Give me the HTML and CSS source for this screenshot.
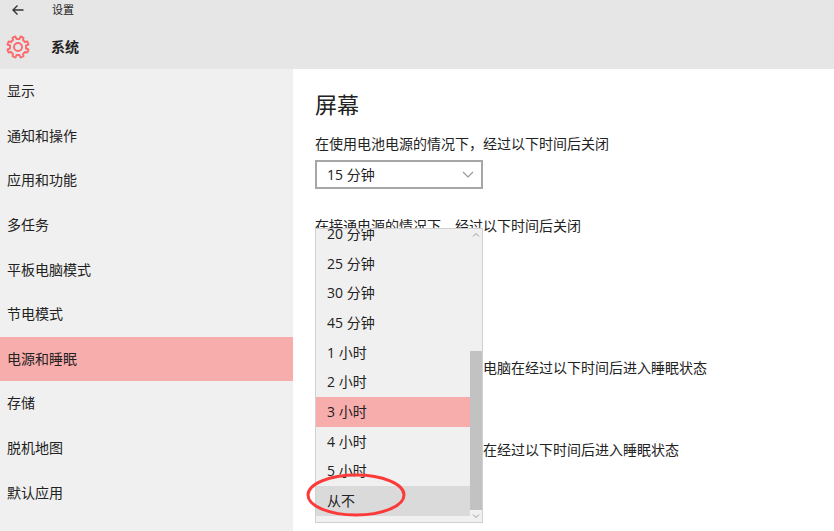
FILE: index.html
```html
<!DOCTYPE html>
<html lang="zh-CN">
<head>
<meta charset="utf-8">
<title>设置</title>
<link rel="stylesheet" href="styles.css">
</head>

<body>
<header class="header">
  <div class="titlebar">
    <button class="back" type="button" aria-label="返回">
      <svg width="12" height="12" viewBox="0 0 12 12"><path d="M11.500 6H1M5.500 1.500L1 6l4.500 4.500"/></svg>
    </button>
    <span class="app-name">设置</span>
  </div>
  <div class="section">
    <svg class="gear" width="24" height="24" viewBox="0 0 24 24">
      <path d="M10.500 4L9.500 1.500Q8 1.800 6.500 2.700L7 5L5 7L2.700 6.500Q1.800 8 1.500 9.500L4 10.500V13.500L1.500 14.500Q1.800 16 2.700 17.500L5 17L7 19L6.500 21.300Q8 22.200 9.500 22.500L10.500 20H13.500L14.500 22.500Q16 22.200 17.500 21.300L17 19L19 17L21.300 17.500Q22.200 16 22.500 14.500L20 13.500V10.500L22.500 9.500Q22.200 8 21.300 6.500L19 7L17 5L17.500 2.700Q16 1.800 14.500 1.500L13.500 4Z"/>
      <circle cx="12" cy="12" r="4"/>
    </svg>
    <h1 class="section-name">系统</h1>
  </div>
</header>

<div class="page">
  <nav class="sidebar">
    <a class="nav-item" href="#">显示</a>
    <a class="nav-item" href="#">通知和操作</a>
    <a class="nav-item" href="#">应用和功能</a>
    <a class="nav-item" href="#">多任务</a>
    <a class="nav-item" href="#">平板电脑模式</a>
    <a class="nav-item" href="#">节电模式</a>
    <a class="nav-item active" href="#">电源和睡眠</a>
    <a class="nav-item" href="#">存储</a>
    <a class="nav-item" href="#">脱机地图</a>
    <a class="nav-item" href="#">默认应用</a>
  </nav>

  <main class="content">
    <section class="group">
      <h2 class="group-title">屏幕</h2>

      <div class="field">
        <label for="screen-battery">在使用电池电源的情况下，经过以下时间后关闭</label>
        <div class="combo">
          <select id="screen-battery"><option>15 分钟</option></select>
          <svg class="chevron" width="12" height="8" viewBox="0 0 12 8"><path d="M1 1l5 5 5-5"/></svg>
        </div>
      </div>

      <div class="field">
        <label for="screen-plugged">在接通电源的情况下，经过以下时间后关闭</label>
        <div class="combo">
          <select id="screen-plugged"><option>3 小时</option></select>
          <div class="popup">
            <ul class="options" role="listbox" aria-label="关闭时间">
              <li role="option">20 分钟</li>
              <li role="option">25 分钟</li>
              <li role="option">30 分钟</li>
              <li role="option">45 分钟</li>
              <li role="option">1 小时</li>
              <li role="option">2 小时</li>
              <li class="selected" role="option" aria-selected="true">3 小时</li>
              <li role="option">4 小时</li>
              <li role="option">5 小时</li>
              <li class="hover" role="option">从不</li>
            </ul>
            <div class="scrollbar">
              <svg class="arrow" width="12" height="12" viewBox="0 0 12 12"><path d="M3 7.500l3-3 3 3"/></svg>
              <div class="track"><div class="thumb"></div></div>
              <svg class="arrow" width="12" height="12" viewBox="0 0 12 12"><path d="M3 4.500l3 3 3-3"/></svg>
            </div>
          </div>
          <svg class="mark" width="100" height="44" viewBox="0 0 100 44"><ellipse cx="50" cy="22" rx="48" ry="20"/></svg>
        </div>
      </div>
    </section>

    <section class="group">
      <h2 class="group-title">睡眠</h2>

      <div class="field">
        <label for="sleep-battery">在使用电池电源的情况下，电脑在经过以下时间后进入睡眠状态</label>
        <div class="combo">
          <select id="sleep-battery"><option>15 分钟</option></select>
        </div>
      </div>

      <div class="field">
        <label for="sleep-plugged">在接通电源的情况下，电脑在经过以下时间后进入睡眠状态</label>
        <div class="combo">
          <select id="sleep-plugged"><option>30 分钟</option></select>
        </div>
      </div>
    </section>
  </main>
</div>
</body>
</html>
```
FILE: styles.css
```css
* {
  box-sizing: border-box;
}

body {
  margin: 0;
  min-height: 100vh;
  display: flex;
  flex-direction: column;
  background-color: #fff;
  color: #222;
  font-family: "Open Sans", "Noto Sans CJK SC", sans-serif;
  font-size: 14px;
  line-height: 20px;
}

svg {
  display: block;
  fill: none;
}

/* header */

.header {
  height: 69px;
  background-color: #e6e6e6;
}

.titlebar {
  display: flex;
  align-items: center;
  height: 20px;
  padding-left: 12px;
}

.back {
  width: 40px;
  padding: 0;
  border: none;
  background: none;
}

.back path {
  stroke: #333;
  stroke-width: 1.4;
}

.app-name {
  font-size: 11px;
}

.section {
  display: flex;
  align-items: center;
  gap: 21px;
  height: 54px;
  padding-left: 6px;
}

.gear {
  stroke: #fb6a6c;
  stroke-width: 1.9;
  stroke-linejoin: round;
}

.section-name {
  margin: 0;
  font-size: 14px;
  font-weight: bold;
}

/* sidebar */

.page {
  flex: 1;
  display: flex;
}

.sidebar {
  flex: 0 0 293px;
  display: flex;
  flex-direction: column;
  padding-bottom: 16px;
  background-color: #f0f0f0;
}

.nav-item {
  flex: 1;
  display: flex;
  align-items: center;
  padding-left: 7px;
  color: inherit;
  text-decoration: none;
}

.nav-item.active {
  background-color: #f8adad;
}

/* content */

.content {
  flex: 1;
  padding: 20px 22px 0;
}

.group + .group {
  margin-top: 42px;
}

.group-title {
  margin: 0 0 15px;
  font-size: 22px;
  font-weight: normal;
  line-height: 30px;
}

.field {
  margin-bottom: 27px;
}

.field label {
  display: block;
  margin-bottom: 6px;
  white-space: nowrap;
}

.combo {
  position: relative;
  width: 168px;
}

.combo select {
  display: block;
  width: 100%;
  height: 29px;
  padding: 0 10px;
  border: 2px solid #a6a6a6;
  border-radius: 0;
  background-color: #fff;
  color: inherit;
  font: inherit;
  appearance: none;
}

.chevron {
  position: absolute;
  top: 11px;
  right: 9px;
  stroke: #999;
  stroke-width: 1.2;
  pointer-events: none;
}

/* open list */

.popup {
  position: absolute;
  z-index: 1;
  bottom: -252px;
  left: 0;
  display: flex;
  align-items: flex-end;
  width: 100%;
  height: 295px;
  overflow: hidden;
  border: 1px solid #d0d0d0;
  background-color: #f0f0f0;
}

.options {
  flex: 1;
  display: flex;
  flex-direction: column;
  height: 303px;
  margin: 0;
  padding: 0 0 6px;
  list-style: none;
}

.options li {
  flex: 1;
  display: flex;
  align-items: center;
  padding-left: 11px;
}

.options .selected {
  background-color: #f8adad;
}

.options .hover {
  background-color: #dadada;
}

.scrollbar {
  display: flex;
  flex-direction: column;
  height: 100%;
}

.track {
  flex: 1;
  display: flex;
  align-items: flex-end;
}

.thumb {
  width: 100%;
  height: 59%;
  background-color: #c2c2c2;
}

.arrow {
  stroke: #999;
}

.mark {
  position: absolute;
  z-index: 2;
  bottom: -246px;
  left: -9px;
  stroke: #fb3a3a;
  stroke-width: 3;
}
```
